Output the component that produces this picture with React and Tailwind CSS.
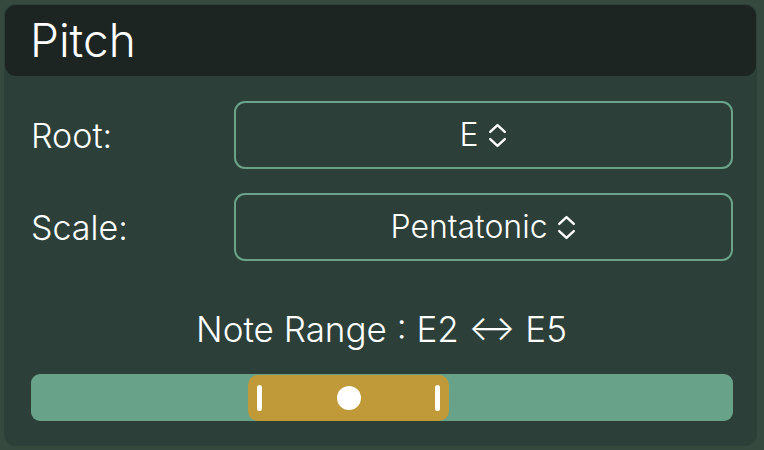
import React from "react";

function Chevrons() {
  return (
    <svg width="21" height="27" viewBox="0 0 20 26" fill="none" stroke="white" strokeWidth="2.3" strokeLinecap="round" strokeLinejoin="round">
      <path d="M3 9.5 L10 3 L17 9.5" />
      <path d="M3 16.5 L10 23 L17 16.5" />
    </svg>
  );
}

function Row({ label, value }) {
  return (
    <div className="flex items-center h-[68px]">
      <div className="w-[203px] text-[34px] font-[350] text-white">{label}</div>
      <div className="flex-1 h-full rounded-[11px] border-2 border-[#6aa38a] flex items-center justify-center gap-[8px] text-[32px] font-[350] text-white">
        <span>{value}</span>
        <Chevrons />
      </div>
    </div>
  );
}

export default function App() {
  return (
    <div className="w-[764px] h-[450px] bg-[#35493f] p-[4px] pr-[7px]" style={{ fontFamily: "Inter, 'Noto Sans', sans-serif" }}>
      <div className="h-[442px] bg-[#2c3f39] rounded-[12px] p-[1px] flex flex-col">
        <div className="h-[71px] bg-[#1c2521] rounded-[11px] flex items-center px-[25px] text-[46px] font-[350] text-white">
          Pitch
        </div>
        <div className="flex flex-col pl-[26px] pr-[23px] pt-[25px] gap-[24px]">
          <Row label="Root:" value="E" />
          <Row label="Scale:" value="Pentatonic" />
        </div>
        <div className="mt-[48px] text-center text-[35px] font-[350] text-white leading-[40px] pl-[2px]">
          Note Range : E2 ↔ E5
        </div>
        <div className="ml-[26px] mr-[23px] mt-[25px] h-[47px] rounded-[9px] bg-[#68a389] relative">
          <div className="absolute left-[217px] top-[1px] w-[201px] h-[46px] rounded-[10px] bg-[#c09a38] flex items-center justify-between px-[9px]">
            <div className="w-[5px] h-[26px] rounded-full bg-white" />
            <div className="w-[24px] h-[24px] rounded-full bg-white" />
            <div className="w-[5px] h-[26px] rounded-full bg-white" />
          </div>
        </div>
      </div>
    </div>
  );
}
